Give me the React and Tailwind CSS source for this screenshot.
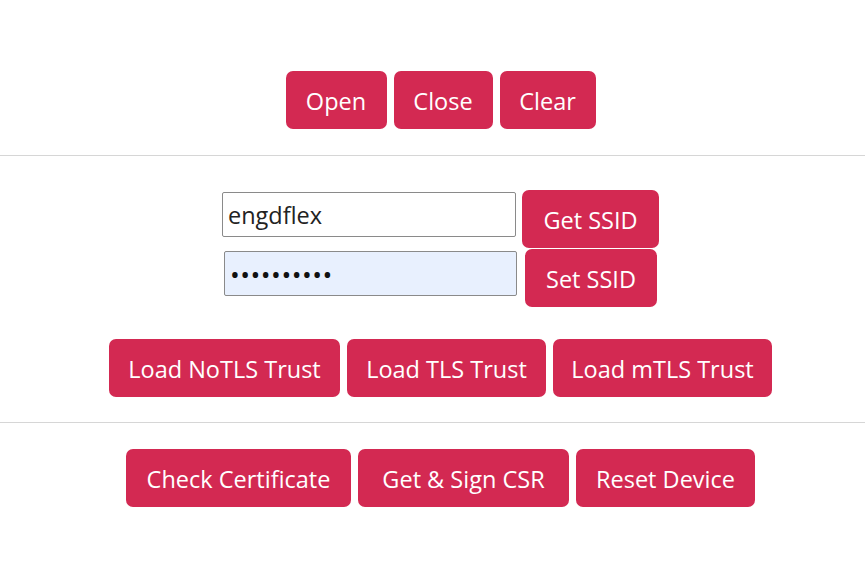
export default function App() {
  const btn =
    "h-[58px] pt-[3px] rounded-[7px] bg-[#d32952] text-white text-[23.5px] leading-none whitespace-nowrap";
  const font = { fontFamily: '"Open Sans", "Noto Sans", sans-serif' };

  return (
    <div className="w-[865px] h-[575px] bg-white pl-4 overflow-hidden" style={font}>
      {/* serial port controls */}
      <div className="flex justify-center gap-[7px] pt-[71px]">
        <button className={`${btn} w-[101px]`}>Open</button>
        <button className={`${btn} w-[99px]`}>Close</button>
        <button className={`${btn} w-[96px]`}>Clear</button>
      </div>

      <hr className="-ml-4 mt-[26px] border-0 border-t border-[#d6d6d6]" />

      {/* wifi credentials */}
      <div className="flex flex-col items-center gap-[1px] pt-[34px]">
        <div className="flex items-start">
          <input
            className="mt-[2px] w-[294px] h-[45px] border border-[#8a8a8a] rounded-[2px] px-[5px] text-[23.5px] text-[#222] bg-white outline-none"
            defaultValue="engdflex"
            style={font}
          />
          <button className={`${btn} ml-[6px] w-[137px]`}>Get SSID</button>
        </div>
        <div className="flex items-start">
          <input
            type="password"
            className="mt-[2px] w-[293px] h-[45px] border border-[#8a8a8a] rounded-[2px] px-[5px] text-[26px] tracking-[0.5px] text-[#111] bg-[#e8f0fe] outline-none"
            defaultValue="••••••••••"
            style={font}
          />
          <button className={`${btn} ml-[8px] w-[132px]`}>Set SSID</button>
        </div>
      </div>

      <div className="flex justify-center gap-[7px] mt-[32px]">
        <button className={`${btn} w-[231px]`}>Load NoTLS Trust</button>
        <button className={`${btn} w-[199px]`}>Load TLS Trust</button>
        <button className={`${btn} w-[219px]`}>Load mTLS Trust</button>
      </div>

      <hr className="-ml-4 mt-[25px] border-0 border-t border-[#d6d6d6]" />

      {/* certificate actions */}
      <div className="flex justify-center gap-[7px] pt-[26px]">
        <button className={`${btn} w-[225px]`}>Check Certificate</button>
        <button className={`${btn} w-[211px]`}>Get &amp; Sign CSR</button>
        <button className={`${btn} w-[179px]`}>Reset Device</button>
      </div>
    </div>
  );
}
